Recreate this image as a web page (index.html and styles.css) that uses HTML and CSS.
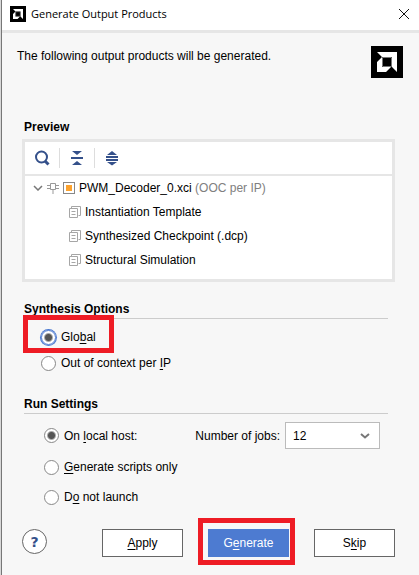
FILE: index.html
```html
<!DOCTYPE html>
<html lang="en">
<head>
<meta charset="utf-8">
<meta name="viewport" content="width=device-width, initial-scale=1">
<title>Generate Output Products</title>
<link rel="stylesheet" href="styles.css">
</head>
<body>
<svg class="defs" aria-hidden="true">
  <symbol id="logo" viewBox="0 0 32 32">
    <rect width="32" height="32" fill="#000"/>
    <path fill="#fff" d="M6 6h20v20l-5-5V11H11zM6 16l5-5v10h9l-5 5H6z"/>
    <path fill="none" stroke="#777" d="M11.500 20.500v-9h9v9z"/>
  </symbol>
  <symbol id="pages" viewBox="0 0 12 12">
    <path fill="none" stroke="#a6a6a6" d="M2.500 2V.5h9v9H9.500M.5 2.500h8v9h-8zM2.500 5.500h4M2.500 8.500h4"/>
  </symbol>
</svg>
<main class="dialog">
  <header class="titlebar">
    <svg class="titlebar-icon" aria-hidden="true"><use href="#logo"/></svg>
    <h1 class="title">Generate Output Products</h1>
    <button class="close" type="button" aria-label="Close">
      <svg width="10" height="10" viewBox="0 0 10 10"><path d="M0 0l10 10M10 0L0 10" stroke="#111" fill="none"/></svg>
    </button>
  </header>

  <form class="content">
    <div class="intro">
      <p class="message">The following output products will be generated.</p>
      <svg class="logo" role="img" aria-label="AMD"><use href="#logo"/></svg>
    </div>

    <section class="preview">
      <h2 class="preview-heading">Preview</h2>
      <div class="panel">
        <div class="toolbar">
          <button class="tool" type="button" aria-label="Search">
            <svg width="16" height="16" viewBox="0 0 16 16" fill="none" stroke="#34508a"><circle cx="7.500" cy="7" r="5.500" stroke-width="2"/><path d="M11 11l3.500 3.500" stroke-width="3"/></svg>
          </button>
          <button class="tool" type="button" aria-label="Collapse all">
            <svg width="16" height="16" viewBox="0 0 16 16" fill="#34508a"><path d="M3 1h10L8 5zM2 7h12v2H2zM8 11l5 4H3z"/></svg>
          </button>
          <button class="tool" type="button" aria-label="Expand all">
            <svg width="16" height="16" viewBox="0 0 16 16" fill="#34508a"><path d="M8 1l5 4H3zM2 6h12v2H2zM2 9h12v2H2zM3 12h10l-5 3.500z"/></svg>
          </button>
        </div>
        <ul class="tree">
          <li class="row root">
            <svg width="10" height="6" viewBox="0 0 10 6"><path d="M1 1l4 4 4-4" fill="none" stroke="#777" stroke-width="1.500"/></svg>
            <svg width="12" height="12" viewBox="0 0 12 12"><path d="M3.500 1.500h5v6h-5zM0 3.500h3M0 6.500h3M9 3.500h3M9 6.500h3M6 8v4" fill="none" stroke="#999"/></svg>
            <svg width="12" height="12" viewBox="0 0 12 12"><rect x=".5" y=".5" width="11" height="11" fill="#fff" stroke="#888"/><rect x="3" y="3" width="6" height="6" fill="#fca22e"/></svg>
            <span class="root-label">PWM_Decoder_0.xci <span class="muted">(OOC per IP)</span></span>
          </li>
          <li class="row child"><svg class="page-icon"><use href="#pages"/></svg>Instantiation Template</li>
          <li class="row child"><svg class="page-icon"><use href="#pages"/></svg>Synthesized Checkpoint (.dcp)</li>
          <li class="row child"><svg class="page-icon"><use href="#pages"/></svg>Structural Simulation</li>
        </ul>
      </div>
    </section>

    <section class="group synthesis">
      <h2 class="heading">Synthesis Options</h2>
      <div class="synthesis-options">
        <label class="option marked"><input class="radio focused" type="radio" name="synthesis" checked><span>Glo<u>b</u>al</span></label>
        <label class="option"><input class="radio" type="radio" name="synthesis"><span>Out of context per <u>I</u>P</span></label>
      </div>
    </section>

    <section class="group run">
      <h2 class="heading">Run Settings</h2>
      <div class="run-options">
        <div class="host">
          <label class="option"><input class="radio" type="radio" name="run" checked><span>On <u>l</u>ocal host:</span></label>
          <div class="jobs">
            <label for="jobs">Number of jobs:</label>
            <div class="select-wrap">
              <select id="jobs" class="select"><option>12</option></select>
              <svg class="select-arrow" width="10" height="6" viewBox="0 0 10 6"><path d="M1 1l4 3.500L9 1" fill="none" stroke="#777" stroke-width="2"/></svg>
            </div>
          </div>
        </div>
        <label class="option tall"><input class="radio" type="radio" name="run"><span><u>G</u>enerate scripts only</span></label>
        <label class="option tall"><input class="radio" type="radio" name="run"><span>D<u>o</u> not launch</span></label>
      </div>
    </section>

    <footer class="actions">
      <button class="help" type="button" aria-label="Help">?</button>
      <div class="buttons">
        <button class="button" type="button"><u>A</u>pply</button>
        <span class="marked-button"><button class="button primary" type="button">G<u>e</u>nerate</button></span>
        <button class="button" type="button">S<u>k</u>ip</button>
      </div>
    </footer>
  </form>
</main>
</body>
</html>
```
FILE: styles.css
```css
* {
  box-sizing: border-box;
}

body {
  margin: 0;
  background: #d8d8d8;
  color: #000;
  font: 12px/20px "Liberation Sans", Arial, sans-serif;
}

h1, h2, p, ul {
  margin: 0;
  padding: 0;
}

button, select, input {
  margin: 0;
  padding: 0;
  color: inherit;
  font: inherit;
}

svg {
  display: block;
  flex: none;
}

u {
  text-underline-offset: 2px;
  text-decoration-skip-ink: none;
}

.defs {
  position: absolute;
  width: 0;
  height: 0;
}

.dialog {
  min-height: 100vh;
  margin-left: 1px;
  border-left: 1px solid #777;
  background: #f7f7f7;
}

.titlebar {
  display: flex;
  align-items: center;
  height: 33px;
  padding: 0 10px 2px 8px;
  border-bottom: 3px solid #e6e6e6;
  background: #fff;
}

.titlebar-icon {
  width: 16px;
  height: 16px;
}

.title {
  flex: 1;
  margin-left: 5px;
  font: 11px/20px "Open Sans", "Noto Sans", sans-serif;
}

.close {
  border: 0;
  background: none;
}

.content {
  padding: 13px 24px 18px 20px;
}

.intro {
  display: flex;
  justify-content: space-between;
  align-items: flex-start;
  margin: 0 -8px 39px -5px;
}

.logo {
  width: 32px;
  height: 32px;
}

.preview-heading {
  margin: 0 0 2px 2px;
  font-size: 12px;
}

.panel {
  border: 3px solid #e6e6e6;
  background: #fff;
}

.toolbar {
  display: flex;
  align-items: center;
  height: 34px;
  border-bottom: 2px solid #e6e6e6;
}

.tool {
  display: flex;
  justify-content: center;
  width: 35px;
  height: 20px;
  padding: 2px 0;
  border: 0;
  border-right: 1px solid #ddd;
  background: none;
}

.tool:last-child {
  border-color: transparent;
}

.tree {
  padding-bottom: 7px;
  list-style: none;
}

.row {
  display: flex;
  align-items: center;
  gap: 4px;
  height: 24px;
}

.root {
  padding-left: 8px;
}

.child {
  padding-left: 44px;
}

.page-icon {
  width: 12px;
  height: 12px;
}

.muted {
  color: #808080;
}

.group {
  margin: 17px 7px 0 2px;
}

.run {
  margin-top: 19px;
}

.heading {
  height: 20px;
  border-bottom: 1px solid #ccc;
  font-size: 12px;
}

.synthesis-options {
  display: flex;
  flex-direction: column;
  align-items: flex-start;
  gap: 2px;
  padding: 6px 0 0 17px;
}

.option {
  display: flex;
  align-items: center;
  gap: 5px;
  height: 24px;
}

.radio {
  appearance: none;
  flex: none;
  width: 15px;
  height: 15px;
  border: 1px solid #888;
  border-radius: 50%;
  background: #fff;
}

.radio:checked {
  background: radial-gradient(circle, #555 3px, #fff 5px);
}

.radio.focused {
  border-color: #4d7bd1;
  box-shadow: 0 0 0 1px #4d7bd1;
}

.marked,
.marked-button {
  position: relative;
}

.marked::after,
.marked-button::after {
  content: "";
  position: absolute;
  border: 5px solid #ee1c25;
  pointer-events: none;
}

.marked::after {
  inset: -10px -18px -4px -18px;
}

.marked-button::after {
  inset: -11px -6px -8px -10px;
}

.run-options {
  padding: 8px 8px 0 20px;
}

.host {
  display: flex;
  justify-content: space-between;
  align-items: center;
  margin-bottom: 3px;
}

.jobs {
  display: flex;
  align-items: center;
  gap: 5px;
}

.select-wrap {
  position: relative;
}

.select {
  appearance: none;
  display: block;
  width: 95px;
  height: 27px;
  padding: 0 24px 0 7px;
  border: 1px solid #bbb;
  border-radius: 0;
  background: #fff;
}

.select-arrow {
  position: absolute;
  top: 11px;
  right: 10px;
  pointer-events: none;
}

.tall {
  height: 30px;
}

.actions {
  display: flex;
  justify-content: space-between;
  align-items: center;
  margin-top: 17px;
}

.help {
  width: 25px;
  height: 25px;
  margin-bottom: 3px;
  border: 1px solid #666;
  border-radius: 50%;
  background: #fff;
  color: #34508a;
  font: bold 14px/20px "DejaVu Sans", sans-serif;
}

.buttons {
  display: flex;
  gap: 25px;
}

.button {
  display: block;
  width: 81px;
  height: 28px;
  border: 1px solid #666;
  background: #fff;
}

.primary {
  border-color: #4d7bd1;
  background: #4d7bd1;
  color: #fff;
}
```
